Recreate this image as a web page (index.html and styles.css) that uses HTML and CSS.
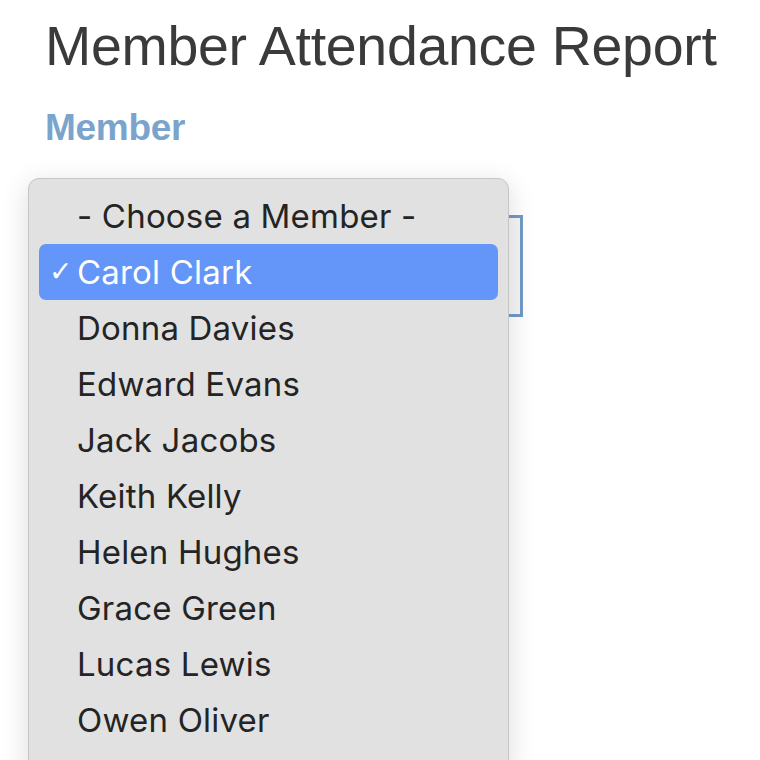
FILE: index.html
```html
<!DOCTYPE html>
<html>
<head>
<meta charset="utf-8">
<link rel="stylesheet" href="styles.css">
</head>
<body>
<div class="page">
  <h1 class="title">Member Attendance Report</h1>
  <div class="label">Member</div>
  <div class="field">
    <div class="selectbox"></div>
  </div>
</div>
<div class="popup">
  <div class="opt">- Choose a Member -</div>
  <div class="opt sel"><span class="check">✓</span>Carol Clark</div>
  <div class="opt">Donna Davies</div>
  <div class="opt">Edward Evans</div>
  <div class="opt">Jack Jacobs</div>
  <div class="opt">Keith Kelly</div>
  <div class="opt">Helen Hughes</div>
  <div class="opt">Grace Green</div>
  <div class="opt">Lucas Lewis</div>
  <div class="opt">Owen Oliver</div>
</div>
</body>
</html>
```
FILE: styles.css
```css
html, body {
  margin: 0;
  padding: 0;
  background: #ffffff;
  overflow: hidden;
  height: 760px;
}
.page {
  padding: 14px 0 0 45px;
  font-family: "Liberation Sans", Arial, sans-serif;
}
.title {
  margin: 0;
  font-size: 55.5px;
  font-weight: normal;
  color: #3a3a3a;
  line-height: 64px;
  letter-spacing: -0.3px;
}
.label {
  margin-top: 28px;
  font-size: 37px;
  font-weight: bold;
  color: #7ba4cd;
  line-height: 44px;
  letter-spacing: -0.3px;
}
.field {
  margin-top: 65px;
}
.selectbox {
  width: 472px;
  height: 96px;
  border: 3px solid #729ac6;
  background: #f6f6f6;
}
.popup {
  position: absolute;
  left: 28px;
  top: 178px;
  width: 481px;
  height: 600px;
  padding: 9px 10px;
  box-sizing: border-box;
  background: #e1e1e1;
  border: 1px solid #c6c6c6;
  border-radius: 11px;
  box-shadow: 0 6px 28px rgba(0,0,0,0.14);
  font-family: Inter, "Noto Sans", sans-serif;
  font-size: 33px;
  letter-spacing: 0.2px;
  color: #242424;
}
.opt {
  height: 56px;
  line-height: 56px;
  padding-left: 38px;
  border-radius: 7px;
  position: relative;
}
.opt.sel {
  background: #6495f8;
  color: #ffffff;
}
.check {
  position: absolute;
  left: 10px;
  font-size: 28px;
  font-weight: bold;
  font-family: "DejaVu Sans", sans-serif;
}
```
